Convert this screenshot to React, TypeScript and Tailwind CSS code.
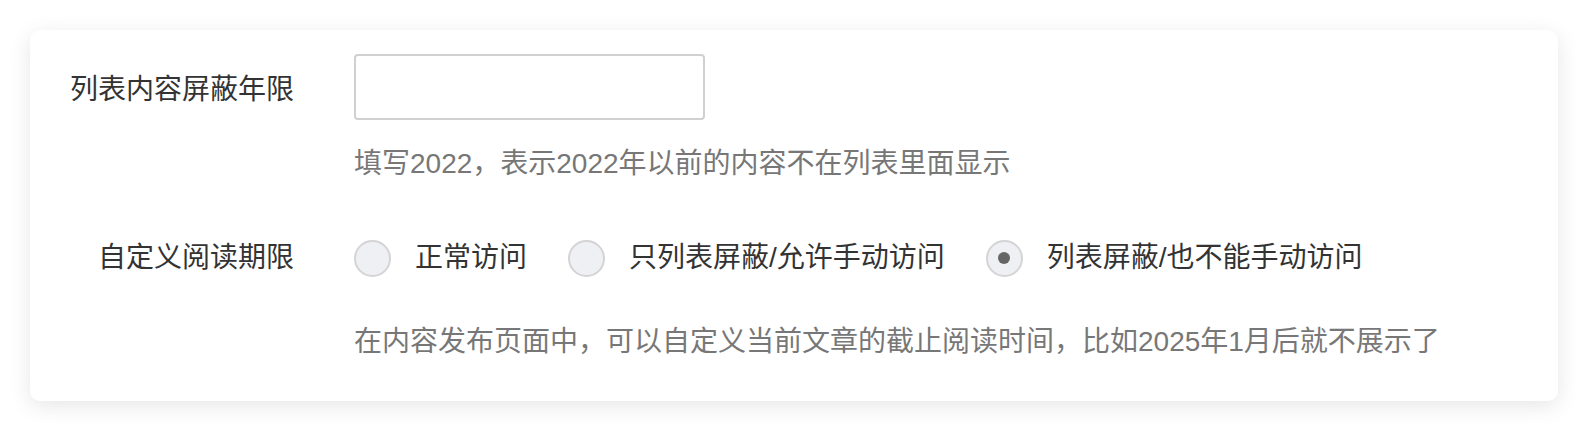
import React from "react";

const font = { fontFamily: '"Liberation Sans", "Noto Sans CJK SC", sans-serif' };

function Radio({ label, checked }: { label: string; checked?: boolean }) {
  return (
    <label className="flex items-center">
      <span className="flex h-[37px] w-[37px] items-center justify-center rounded-full border-2 border-[#d4d4d4] bg-[#eff0f4]">
        {checked && <span className="h-[12px] w-[12px] rounded-full bg-[#666666]" />}
      </span>
      <span className="ml-[24px] text-[28px] leading-[40px] text-[#333333]">{label}</span>
    </label>
  );
}

export default function App() {
  return (
    <div className="min-h-[432px] bg-white pt-[30px] px-[30px]" style={font}>
      <div className="w-[1528px] rounded-[10px] bg-white pt-[24px] pb-[39px] shadow-[0_5px_22px_rgba(0,0,0,0.10)]">
        <div className="flex items-center">
          <div className="w-[264px] pt-[6px] text-right text-[28px] leading-[40px] text-[#333333]">列表内容屏蔽年限</div>
          <input
            className="ml-[60px] h-[66px] w-[351px] rounded-[4px] border-2 border-[#d0d0d0] bg-white px-3 text-[28px] outline-none"
            type="text"
          />
        </div>
        <div className="ml-[324px] mt-[24px] text-[28px] leading-[40px] text-[#777777]">
          填写2022，表示2022年以前的内容不在列表里面显示
        </div>
        <div className="mt-[54px] flex items-center">
          <div className="w-[264px] text-right text-[28px] leading-[40px] text-[#333333]">自定义阅读期限</div>
          <div className="ml-[60px] flex items-center gap-[41px]">
            <Radio label="正常访问" />
            <Radio label="只列表屏蔽/允许手动访问" />
            <Radio label="列表屏蔽/也不能手动访问" checked />
          </div>
        </div>
        <div className="ml-[324px] mt-[44px] text-[28px] leading-[40px] text-[#777777]">
          在内容发布页面中，可以自定义当前文章的截止阅读时间，比如2025年1月后就不展示了
        </div>
      </div>
    </div>
  );
}
